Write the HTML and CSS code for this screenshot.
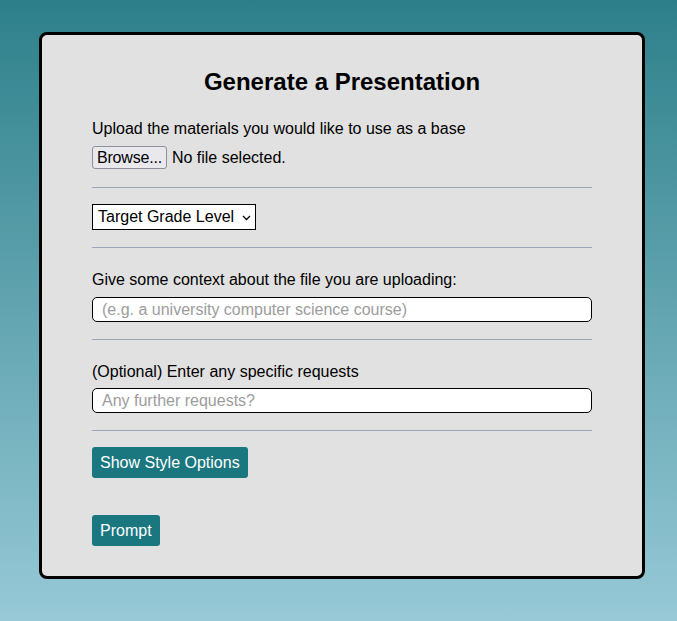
FILE: index.html
```html
<!DOCTYPE html>
<html>
<head>
<meta charset="utf-8">
<link rel="stylesheet" href="styles.css">
</head>
<body>
<div class="card">
  <h2 class="title">Generate a Presentation</h2>
  <div class="label first">Upload the materials you would like to use as a base</div>
  <div class="file-row">
    <span class="browse">Browse...</span>
    <span class="file-text">No file selected.</span>
  </div>
  <div class="rule r1"></div>
  <div class="select">
    <span>Target Grade Level</span>
    <svg class="chev" width="9" height="6" viewBox="0 0 9 6"><path d="M1 1 L4.5 4.5 L8 1" fill="none" stroke="#000" stroke-width="1.3"/></svg>
  </div>
  <div class="rule"></div>
  <div class="label">Give some context about the file you are uploading:</div>
  <div class="input"><span class="ph">(e.g. a university computer science course)</span></div>
  <div class="rule"></div>
  <div class="label">(Optional) Enter any specific requests</div>
  <div class="input i2"><span class="ph">Any further requests?</span></div>
  <div class="rule last"></div>
  <div class="btn">Show Style Options</div>
  <div class="btn prompt">Prompt</div>
</div>
</body>
</html>
```
FILE: styles.css
```css
html, body {
  margin: 0;
  padding: 0;
}
body {
  min-height: 621px;
  background: linear-gradient(to bottom, #2d808a 0%, #97c9d7 100%);
  font-family: "Liberation Sans", Arial, sans-serif;
  font-size: 16px;
  color: #000;
  padding: 32px 0 0 39px;
  box-sizing: border-box;
}
.card {
  width: 500px;
  height: 541px;
  box-sizing: content-box;
  padding: 0 50px;
  background: #e1e1e1;
  border: 3px solid #000;
  border-radius: 8px;
}
.title {
  margin: 0;
  padding-top: 33px;
  font-size: 24px;
  font-weight: bold;
  text-align: center;
  line-height: 28px;
}
.label {
  line-height: 18px;
  margin-top: 23px;
}
.label.first {
  margin-top: 24px;
}
.file-row {
  display: flex;
  align-items: center;
  margin-top: 8px;
  height: 23px;
}
.browse {
  box-sizing: border-box;
  height: 23px;
  padding: 0 4px;
  line-height: 21px;
  border: 1px solid #8f8f9d;
  border-radius: 3px;
  background: #e9e9ed;
  letter-spacing: -0.2px;
}
.file-text {
  margin-left: 5px;
}
.rule {
  height: 1px;
  background: #9ba7b9;
  margin-top: 17px;
  margin-bottom: 17px;
}
.rule.r1 {
  margin-top: 18px;
  margin-bottom: 16px;
}
.rule.last {
  margin-bottom: 16px;
}
.select {
  box-sizing: border-box;
  width: 164px;
  height: 26px;
  border: 1px solid #000;
  background: #fff;
  display: flex;
  align-items: center;
  padding: 0 4px 0 5px;
  justify-content: space-between;
}
.chev {
  margin-top: 1px;
}
.input {
  box-sizing: border-box;
  height: 25px;
  margin-top: 8px;
  border: 1px solid #000;
  border-radius: 5px;
  background: #fff;
  padding: 0 9px;
  line-height: 23px;
}
.input.i2 {
  margin-top: 7px;
}
.ph {
  color: #9c9c9c;
}
.btn {
  display: inline-block;
  box-sizing: border-box;
  height: 31px;
  line-height: 31px;
  padding: 0 8px;
  background: #1b777f;
  color: #fff;
  border-radius: 3px;
}
.prompt {
  display: block;
  width: max-content;
  margin-top: 37px;
}
```
